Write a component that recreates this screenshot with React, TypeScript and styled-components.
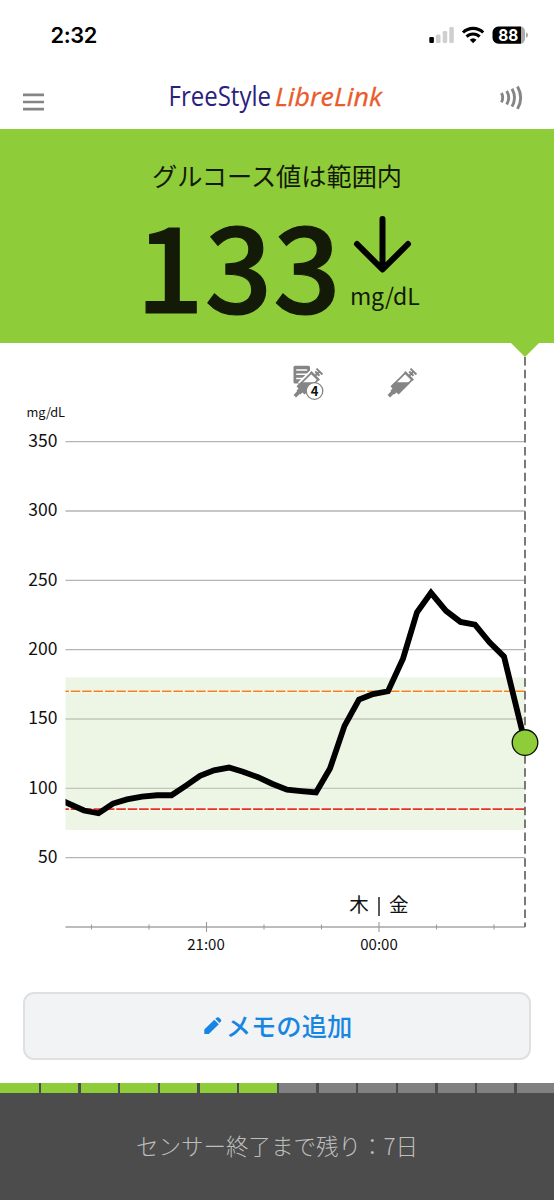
import React from 'react';
import styled, { createGlobalStyle } from 'styled-components';

const GREEN = '#8fcc3a';
const CJK = '"Noto Sans CJK JP", "Noto Sans", sans-serif';

const GlobalStyle = createGlobalStyle`
  * { box-sizing: border-box; }
  body { margin: 0; background: #fff; font-family: ${CJK}; }
`;

const Screen = styled.main`
  width: 554px;
  height: 1200px;
  display: flex;
  flex-direction: column;
  overflow: hidden;
  background: #fff;
`;

const StatusBar = styled.div`
  height: 70px;
  flex: none;
  display: flex;
  align-items: center;
  justify-content: space-between;
  padding: 0 25px 0 50.5px;
`;

const Clock = styled.span`
  font: 600 21.8px/26px Inter, sans-serif;
  letter-spacing: -0.4px;
  color: #000;
`;

const AppHeader = styled.header`
  height: 59px;
  flex: none;
  display: grid;
  grid-template-columns: 48px 1fr 56px;
  padding-left: 22px;
`;

const IconButton = styled.button<{ $top: number }>`
  display: flex;
  align-items: flex-start;
  border: 0;
  padding: ${(p) => p.$top}px 0 0;
  background: none;
`;

const Logo = styled.svg`
  display: block;
  margin-left: 98px;
`;

const Reading = styled.section`
  height: 214px;
  flex: none;
  background: ${GREEN};
  color: #141a08;
`;

const ReadingTitle = styled.h1`
  margin: 0;
  padding-top: 28px;
  font-size: 25.2px;
  font-weight: 400;
  line-height: 37px;
  text-align: center;
`;

const ReadingRow = styled.div`
  display: flex;
  height: 148px;
  padding-left: 136px;
`;

const Value = styled.span`
  width: 210px;
  margin-top: 25px;
  height: 84px;
  font-size: 119px;
  font-weight: 500;
  line-height: 84px;
  letter-spacing: 0.7px;
  -webkit-text-stroke: 1.2px currentColor;
`;

const Trend = styled.div`
  display: flex;
  flex-direction: column;
  padding: 21px 0 0 4px;
`;

const Unit = styled.span`
  margin-top: 2px;
  font-size: 23px;
  line-height: 36px;
  letter-spacing: -0.2px;
`;

const Chart = styled.svg`
  display: block;
  flex: none;
  font-family: ${CJK};
  fill: #111;
`;

const NoteButton = styled.button`
  height: 68px;
  flex: none;
  margin: 22px 23px 23px;
  padding: 0 0 2px 1px;
  display: flex;
  align-items: center;
  justify-content: center;
  gap: 4px;
  border: 2px solid #dfe0e2;
  border-radius: 11px;
  background: #f2f3f5;
  color: #1786e3;
  font: 500 25.3px/38px ${CJK};
`;

const Footer = styled.footer`
  flex: 1;
  background: #4c4c4c;
  color: #bebebe;
`;

const SensorLife = styled.div`
  display: grid;
  grid-template-columns: 38.6px repeat(12, 37.27px) 1fr;
  gap: 2.4px;
  height: 10px;
`;

const Day = styled.div<{ $left: boolean }>`
  background: ${(p) => (p.$left ? GREEN : '#808080')};
`;

const SensorText = styled.p`
  margin: 34px 0 0;
  font-size: 22.5px;
  font-weight: 300;
  line-height: 36px;
  text-align: center;
`;

const yOf = (v: number) => 584 - v * 1.3867;

const levels = [350, 300, 250, 200, 150, 100, 50];
const ticks = [91.5, 149, 206.5, 264, 321.5, 379, 436.5, 494];

const trace: [number, number][] = [
  [62, 91.5], [65.5, 90], [84, 84], [98.5, 82], [113, 89], [127, 92], [142, 94], [157, 95],
  [171.5, 95], [186, 102], [200, 109], [214, 113], [229, 115], [243, 112], [258, 108],
  [272, 103.3], [287, 99], [301, 98], [316, 97], [330, 114.3], [344.5, 145], [359, 164],
  [373, 168], [388, 170], [403, 193.5], [417, 227], [431, 241], [446, 228], [460.5, 220],
  [475, 218], [489.5, 205.3], [504, 195], [525, 133],
];

const Syringe = ({ x, y, halo }: { x: number; y: number; halo?: boolean }) => (
  <g transform={`translate(${x} ${y}) rotate(45)`}>
    {halo && <path d="M-7.500 6h15v19h-15z" fill="#fff" />}
    <path d="M-4.800 9h9.600v18.500h-9.600z" fill="#fff" stroke="#858585" strokeWidth="1.700" />
    <path d="M-5.600 23L5.600 11.800V29H2.800V32H1.800V37H-1.800V32H-2.800V29H-5.600z" fill="#858585" />
    <path d="M-6 8.500h12M0 8.500V2M-4.200 2.200h8.400M-3 5.200h6" fill="none" stroke="#858585" strokeWidth="2" />
  </g>
);

function GlucoseChart() {
  return (
    <Chart width="554" height="627" viewBox="0 0 554 627">
      <defs>
        <clipPath id="plot"><rect x="65.500" y="90" width="488" height="500" /></clipPath>
      </defs>

      <rect x="65.500" y={yOf(180)} width="459.500" height={110 * 1.3867} fill="#edf5e4" />
      {levels.map((v) => (
        <g key={v}>
          <path d={`M65.500 ${yOf(v)}H525`} stroke={v === 150 || v === 100 ? '#c1c7bc' : '#b4b4b4'} strokeWidth="1.300" />
          <text x="57.500" y={yOf(v) + 5.3} fontSize="17.500" textAnchor="end">{v}</text>
        </g>
      ))}
      <text x="26.500" y="73.500" fontSize="12.800" textLength="38.500">mg/dL</text>

      {[{ v: 170, c: '#f08026' }, { v: 85, c: '#e52e2e' }].map(({ v, c }) => (
        <g key={v} fill="none">
          <path d={`M65.500 ${yOf(v)}H525`} stroke="#fbfde9" strokeWidth="2.600" />
          <path d={`M65.500 ${yOf(v)}H525`} stroke={c} strokeWidth="1.600" strokeDasharray="9.600 1.800" strokeDashoffset="6.200" />
        </g>
      ))}

      <path d="M65.500 584H525" stroke="#a6a6a6" strokeWidth="1.400" />
      {ticks.map((x) => {
        const major = x === 206.5 || x === 379;
        return <path key={x} d={major ? `M${x} 579v10` : `M${x} 581.500v5`} stroke="#9a9a9a" strokeWidth="1.100" />;
      })}
      <text x="206" y="606.500" fontSize="15" textAnchor="middle">21:00</text>
      <text x="379" y="606.500" fontSize="15" textAnchor="middle">00:00</text>
      <text x="359" y="568.500" fontSize="19.500" textAnchor="middle">木</text>
      <path d="M379 554v19" stroke="#222" strokeWidth="1.500" />
      <text x="398.700" y="568.500" fontSize="19.500" textAnchor="middle">金</text>

      <path d="M525 14V584" stroke="#6c6c6c" strokeWidth="1.800" strokeDasharray="8.500 4.350" />
      <path d="M511 0H539L525 14z" fill={GREEN} />

      <path d="M295 22.800h13.500a1.500 1.500 0 0 1 1.500 1.500V38L305 40.500H295a1.500 1.500 0 0 1-1.500-1.500V24.300a1.500 1.500 0 0 1 1.500-1.500z" fill="#858585" />
      <path d="M296.200 27h11M296.200 31.300h11M296.200 35.600h7" stroke="#fff" strokeWidth="1.500" />
      <Syringe x={321} y={27} halo />
      <circle cx="314.500" cy="48" r="8.300" fill="#fff" stroke="#858585" strokeWidth="1.300" />
      <text x="314.500" y="52.700" fontSize="13" fontWeight="700" textAnchor="middle">4</text>
      <Syringe x={415} y={27} />

      <polyline
        clipPath="url(#plot)"
        points={trace.map(([x, v]) => `${x},${yOf(v)}`).join(' ')}
        fill="none"
        stroke="#000"
        strokeWidth="5.800"
        strokeLinejoin="miter"
      />
      <circle cx="525" cy={yOf(133)} r="12.800" fill={GREEN} stroke="#0a0f04" strokeWidth="1.300" />
    </Chart>
  );
}

const StatusIcons = () => (
  <svg width="100" height="26" viewBox="429 22 100 26">
    <rect x="429.300" y="37" width="4.600" height="6" rx="1.200" />
    <g fill="#cfcfcf">
      <rect x="436" y="34.500" width="4.500" height="8.500" rx="1.200" />
      <rect x="442.700" y="31" width="4.500" height="12" rx="1.200" />
      <rect x="449.300" y="27" width="4.500" height="16" rx="1.200" />
    </g>
    <g fill="none" stroke="#000" strokeWidth="3.100">
      <path d="M463 32.500a14.500 14.500 0 0 1 20.200 0" />
      <path d="M466.600 36.700a9.200 9.200 0 0 1 13 0" />
    </g>
    <path d="M473.100 43.300l-3.400-3.500a5 5 0 0 1 6.800 0z" />
    <path d="M498.500 26.500H521V43.700H498.500a6 6 0 0 1-6-6v-5.200a6 6 0 0 1 6-6z" />
    <path d="M521 26.500a4.200 5 0 0 1 4 5.500v6.200a4.200 5 0 0 1-4 5.500zM526 32.200q2.200.8 2.200 2.900t-2.200 2.900z" fill="#aaa" />
    <text x="508.300" y="40.900" fontFamily="Inter, sans-serif" fontWeight="700" fontSize="16.500" textLength="20" lengthAdjust="spacingAndGlyphs" textAnchor="middle" fill="#fff">88</text>
  </svg>
);

export default function App() {
  return (
    <Screen>
      <GlobalStyle />
      <StatusBar>
        <Clock>2:32</Clock>
        <StatusIcons />
      </StatusBar>
      <AppHeader>
        <IconButton $top={22} aria-label="menu">
          <svg width="24" height="20" viewBox="0 0 24 20">
            <path d="M1 2.800h21M1 10h21M1 17.200h21" stroke="#858585" strokeWidth="2.700" />
          </svg>
        </IconButton>
        <Logo width="220" height="50" viewBox="168 70 220 50" fontFamily='"Open Sans", "Noto Sans", sans-serif'>
          <text x="168.500" y="105.700" fontSize="27.500" fill="#29217c" textLength="102.500" lengthAdjust="spacingAndGlyphs">FreeStyle</text>
          <text x="275" y="105.700" fontSize="25.500" fontStyle="italic" fill="#ea5b2b" stroke="#ea5b2b" strokeWidth="0.300" textLength="107" lengthAdjust="spacingAndGlyphs">LibreLink</text>
        </Logo>
        <IconButton $top={14} aria-label="scan">
          <svg width="28" height="28" viewBox="497.500 84 28 28" fill="none" stroke="#858585" strokeWidth="2.900">
            <path d="M501 93q2.400 4.700 0 9.400M506.200 91q4 6.700 0 13.400M511.500 88.800q5 8.900 0 17.800M517 86.500q6.400 11.200 0 22.400" />
          </svg>
        </IconButton>
      </AppHeader>
      <Reading>
        <ReadingTitle>グルコース値は範囲内</ReadingTitle>
        <ReadingRow>
          <Value>133</Value>
          <Trend>
            <svg width="66" height="60" viewBox="350 215 66 60" fill="none" stroke="#000" strokeWidth="6" strokeLinecap="round" strokeLinejoin="round">
              <path d="M382.500 219V269M357 244l25.500 25.500L408 244" />
            </svg>
            <Unit>mg/dL</Unit>
          </Trend>
        </ReadingRow>
      </Reading>
      <GlucoseChart />
      <NoteButton>
        <svg width="19" height="20" viewBox="203 1016 19 20" fill="#1786e3">
          <path d="M204.300 1030.500l10-9.800 4.500 4.500-10 9.800h-4.500zM215.300 1019.700l1.600-1.300q1-.6 2 .2l2 2q.8 1 0 2l-1.400 1.300z" />
        </svg>
        メモの追加
      </NoteButton>
      <Footer>
        <SensorLife>
          {Array.from({ length: 14 }, (_, i) => <Day key={i} $left={i < 7} />)}
        </SensorLife>
        <SensorText>センサー終了まで残り：7日</SensorText>
      </Footer>
    </Screen>
  );
}
